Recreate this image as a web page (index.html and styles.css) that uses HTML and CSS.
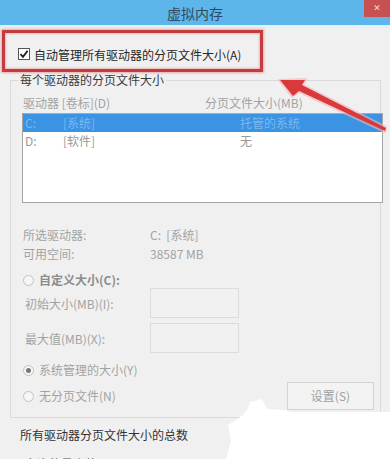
FILE: index.html
```html
<!DOCTYPE html>
<html lang="zh-CN">
<head>
<meta charset="utf-8">
<title>虚拟内存</title>
<link rel="stylesheet" href="styles.css">
</head>
<body>
<div class="window">
  <div class="titlebar">
    <span class="spacer"></span>
    <span class="title">虚拟内存</span>
    <span class="close">✕</span>
  </div>
  <div class="content">
    <div class="auto-box">
      <span class="checkbox">
        <svg width="10" height="10" viewBox="0 0 10 10"><path d="M1.5 5.2 L4 7.8 L8.6 1.8" fill="none" stroke="#1a1a1a" stroke-width="1.8"/></svg>
      </span>
      <span class="auto-label">自动管理所有驱动器的分页文件大小(A)</span>
    </div>

    <fieldset class="group">
      <legend>每个驱动器的分页文件大小</legend>
      <div class="cols">
        <span class="col-drive">驱动器 [卷标](D)</span>
        <span>分页文件大小(MB)</span>
      </div>
      <div class="listbox">
        <div class="row sel"><span class="c1">C:</span><span class="c2">[系统]</span><span>托管的系统</span></div>
        <div class="row"><span class="c1">D:</span><span class="c2">[软件]</span><span>无</span></div>
      </div>

      <div class="info">
        <span>所选驱动器:</span><span>C:&nbsp;&nbsp;[系统]</span>
        <span>可用空间:</span><span>38587 MB</span>
      </div>

      <div class="radio-row first"><span class="radio"></span><span class="radio-label strong">自定义大小(C):</span></div>

      <div class="fields">
        <span class="field-label">初始大小(MB)(I):</span><span class="input"></span>
        <span class="field-label">最大值(MB)(X):</span><span class="input"></span>
      </div>

      <div class="radio-row sys"><span class="radio checked"></span><span class="radio-label">系统管理的大小(Y)</span></div>
      <div class="last-row">
        <div class="radio-row"><span class="radio"></span><span class="radio-label">无分页文件(N)</span></div>
        <span class="button">设置(S)</span>
      </div>
    </fieldset>

    <div class="total">所有驱动器分页文件大小的总数</div>
    <div class="info bottom">
      <span>允许的最小值:</span><span>16 MB</span>
      <span>推荐:</span><span>1910 MB</span>
    </div>
  </div>

  <svg class="overlay" width="390" height="459" viewBox="0 0 390 459">
    <polygon points="279,80 306,79 303,85 386,127 385,132 299,92 292,97" fill="#f2a0a0" opacity="0.6" stroke="#f5b5b5" stroke-width="2" stroke-linejoin="round"/>
    <polygon points="280,80 305,80 302,85 386,128 385,131 299,91 293,96" fill="#d9393b"/>
    <polygon points="250,402 262,399 267,409 285,410 291,412 390,412 390,459 226,459 231,441 228,425 236,420 243,415 248,408" fill="#ffffff"/>
  </svg>
</div>
</body>
</html>
```

FILE: styles.css
```css
html, body {
  margin: 0;
  padding: 0;
  overflow: hidden;
}

body {
  font-family: "Noto Sans CJK SC", "Noto Sans", sans-serif;
  font-size: 12px;
  color: #a3a3a3;
}

.window {
  position: relative;
  width: 390px;
  height: 459px;
  overflow: hidden;
  background: #f0f0f0;
}

.titlebar {
  display: grid;
  grid-template-columns: 1fr auto 1fr;
  height: 25px;
  background: #5db6e9;
  border-bottom: 3px solid #e4eff6;
}

.title {
  font-size: 14px;
  line-height: 27px;
  color: #2f4a63;
}

.close {
  justify-self: end;
  align-self: start;
  width: 26px;
  height: 17px;
  background: #c75150;
  color: #f5d6d6;
  font-size: 9px;
  line-height: 17px;
  text-align: center;
  font-family: "DejaVu Sans", sans-serif;
  font-weight: bold;
}

.content {
  display: flex;
  flex-direction: column;
}

.auto-box {
  box-sizing: border-box;
  width: 261px;
  height: 42px;
  margin: 2px 0 0 2px;
  padding: 6px 0 0 13px;
  border: 3px solid #c23c40;
  box-shadow: 0 0 2px 1px rgba(230, 140, 140, 0.7), inset 0 0 2px 1px rgba(230, 140, 140, 0.6);
  display: flex;
  align-items: center;
  gap: 4px;
}

.checkbox {
  box-sizing: border-box;
  width: 12px;
  height: 12px;
  border: 1px solid #555;
  background: #fff;
  display: flex;
  align-items: center;
  justify-content: center;
}

.auto-label {
  color: #262626;
  font-size: 12px;
  line-height: 16px;
  margin-top: 1px;
}

.group {
  margin: 1px 9px 0 10px;
  padding: 8px 0 7px 12px;
  border: 1px solid #dadada;
  min-width: 0;
}

.group legend {
  margin-left: -5px;
  padding: 0 2px;
  font-size: 12px;
  line-height: 14px;
  color: #3a3a3a;
}

.cols {
  display: flex;
  line-height: 16px;
}

.col-drive {
  width: 182px;
}

.listbox {
  box-sizing: border-box;
  height: 90px;
  margin: 2px -3px 0 -1px;
  border: 1px solid #a5a5a5;
  border-top-color: #7fb4e6;
  background: #fff;
}

.row {
  display: flex;
  height: 18px;
  line-height: 18px;
  padding-left: 2px;
  color: #9a9a9a;
}

.row.sel {
  background: #3a93e3;
  color: #7db8ee;
}

.c1 {
  width: 38px;
}

.c2 {
  width: 177px;
}

.info {
  display: grid;
  grid-template-columns: 127px 1fr;
  line-height: 19px;
  margin-top: 22px;
}

.radio-row {
  display: flex;
  align-items: center;
  gap: 5px;
  line-height: 18px;
}

.radio-row.first {
  margin-top: 8px;
}

.radio-row.sys {
  margin-top: 8px;
}

.radio {
  box-sizing: border-box;
  width: 11px;
  height: 11px;
  border: 1px solid #c2c2c2;
  border-radius: 50%;
  background: #f6f6f6;
  display: flex;
  align-items: center;
  justify-content: center;
}

.radio.checked::after {
  content: "";
  width: 5px;
  height: 5px;
  border-radius: 50%;
  background: #777;
}

.radio-label.strong {
  color: #8c8c8c;
  font-weight: bold;
}

.fields {
  display: grid;
  grid-template-columns: 125px 89px;
  grid-auto-rows: 30px;
  row-gap: 5px;
  align-items: center;
  margin: -1px 0 0 2px;
}

.input {
  box-sizing: border-box;
  height: 30px;
  border: 1px solid #dcdcdc;
  background: #f1f1f1;
}

.last-row {
  display: flex;
  justify-content: space-between;
  align-items: center;
  margin-top: 3px;
  padding-right: 6px;
}

.button {
  box-sizing: border-box;
  width: 87px;
  height: 28px;
  border: 1px solid #d4d4d4;
  background: #f3f3f3;
  text-align: center;
  line-height: 26px;
  color: #a0a0a0;
}

.total {
  margin-top: 9px;
  padding-left: 20px;
  line-height: 16px;
  color: #333;
}

.info.bottom {
  margin-top: 11px;
  padding-left: 25px;
  color: #555;
}

.overlay {
  position: absolute;
  left: 0;
  top: 0;
  pointer-events: none;
}
```
